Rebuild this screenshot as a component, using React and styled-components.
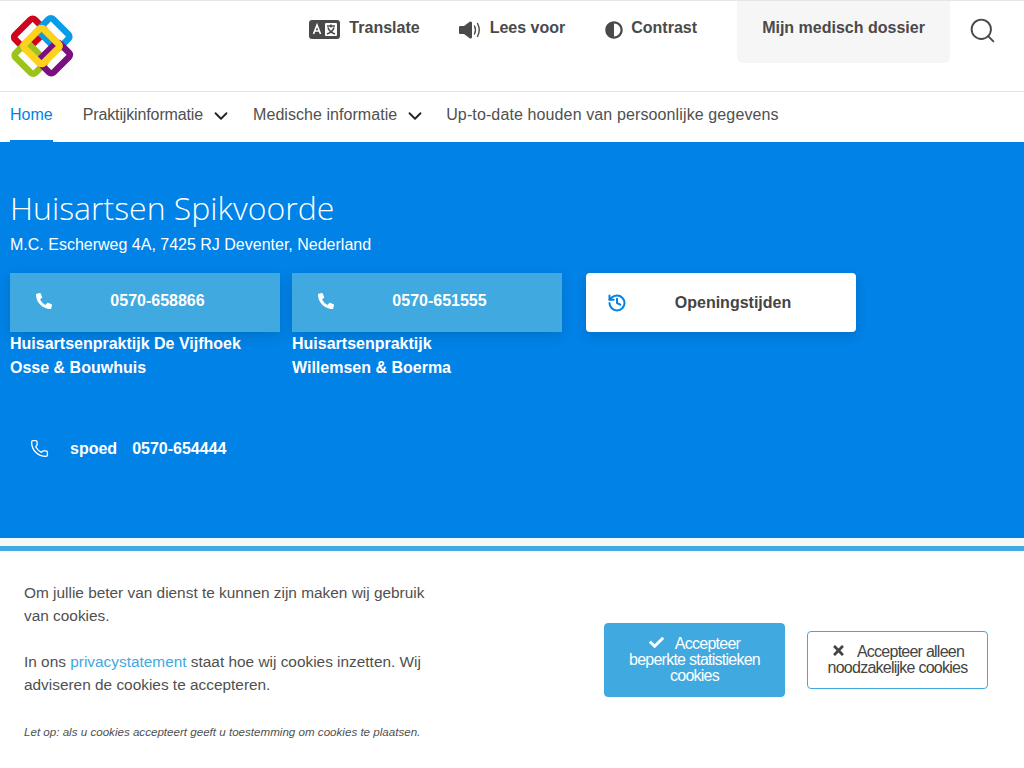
import React from 'react'
import styled, { createGlobalStyle } from 'styled-components'
import { FaAdjust, FaCheck, FaPhoneAlt, FaTimes } from 'react-icons/fa'
import { ChevronDown, History, Phone, Search } from 'lucide-react'

const GlobalStyle = createGlobalStyle`
    html, body {
        margin: 0;
        padding: 0;
        background: #fff;
        font-family: "Liberation Sans", Arial, sans-serif;
        color: #444;
    }
    * { box-sizing: border-box; }
`

const Page = styled.div`
    width: 1024px;
    height: 768px;
    overflow: hidden;
    display: flex;
    flex-direction: column;
    background: #f7f7f7;
`

const TopBar = styled.header`
    height: 92px;
    flex: none;
    background: #fff;
    border-top: 1px solid #e5e5e5;
    border-bottom: 1px solid #e5e5e5;
    display: flex;
    justify-content: space-between;
    padding-left: 10px;
`

const Logo = styled.svg`
    width: 64px;
    height: 64px;
    margin-top: 13px;
    background: #fdfdfd;
`

const Tools = styled.div`
    display: flex;
    align-items: flex-start;
`

const Tool = styled.a`
    display: flex;
    align-items: center;
    gap: ${p => p.$gap}px;
    margin-left: ${p => p.$left || 0}px;
    height: 54px;
    font-size: 16px;
    font-weight: 700;
    color: #4a4a4a;
    white-space: nowrap;
    svg { color: #4a4a4a; margin-top: 3px; }
`

const DossierButton = styled.a`
    width: 213px;
    height: 62px;
    margin: 0 0 0 40px;
    background: #f6f6f6;
    border-radius: 0 0 6px 6px;
    font-size: 16px;
    font-weight: 700;
    color: #4a4a4a;
    display: flex;
    align-items: center;
    justify-content: center;
    padding-bottom: 8px;
`

const SearchButton = styled.button`
    width: 74px;
    height: 59px;
    border: 0;
    background: none;
    padding: 0 10px 0 0;
    display: flex;
    align-items: center;
    justify-content: center;
    color: #4a4a4a;
`

const Nav = styled.nav`
    height: 50px;
    flex: none;
    background: #fff;
    display: flex;
    padding-left: 10px;
`

const NavItem = styled.a`
    height: 50px;
    display: flex;
    align-items: center;
    margin-right: ${p => p.$gap}px;
    font-size: 16px;
    letter-spacing: ${p => p.$track || 0}px;
    color: ${p => (p.$active ? '#0082e6' : '#505050')};
    border-bottom: 2px solid ${p => (p.$active ? '#0082e6' : 'transparent')};
    padding-bottom: 3px;
    white-space: nowrap;
    svg { margin-left: 7px; margin-top: 3px; color: #222; }
`

const Hero = styled.section`
    height: 396px;
    flex: none;
    background: #0082e6;
    color: #fff;
    padding: 46px 10px 0;
`

const Title = styled.h1`
    margin: 0;
    font-size: 32px;
    line-height: 40px;
    font-weight: 300;
    font-family: "Open Sans", sans-serif;
`

const Address = styled.p`
    margin: 5px 0 0;
    font-size: 16px;
    line-height: 24px;
`

const CallRow = styled.div`
    display: flex;
    margin-top: 16px;
`

const CallColumn = styled.div`
    width: 270px;
    margin-right: ${p => p.$gap}px;
`

const CallButton = styled.a`
    height: 59px;
    display: flex;
    align-items: center;
    padding: ${p => (p.$white ? '0 0 0 21px' : '0 0 3px 26px')};
    border-radius: ${p => (p.$white ? '4px' : '0')};
    background: ${p => (p.$white ? '#fff' : '#3fa9e0')};
    color: ${p => (p.$white ? '#444' : '#fff')};
    box-shadow: 0 4px 12px rgba(0, 0, 0, 0.12);
    font-weight: 700;
    font-size: 16px;
    svg { flex: none; color: ${p => (p.$white ? '#0082e6' : '#fff')}; }
`

const CallLabel = styled.span`
    flex: 1;
    text-align: center;
    padding-right: 17px;
`

const Practice = styled.div`
    font-weight: 700;
    font-size: 16px;
    line-height: 24px;
`

const Urgent = styled.div`
    display: flex;
    align-items: center;
    margin: 59px 0 0 20px;
    font-weight: 700;
    font-size: 16px;
    span:first-of-type { margin: 0 15px 0 21px; }
`

const CookieBar = styled.aside`
    margin-top: 8px;
    flex: 1;
    background: #fff;
    border-top: 5px solid #3fa9e0;
    display: flex;
    justify-content: space-between;
    padding: 30px 36px 0 24px;
`

const CookieText = styled.div`
    width: 405px;
    font-size: 15.4px;
    line-height: 23px;
    color: #505050;
    p { margin: 0 0 23px; }
    a { color: #3fa9e0; }
`

const Note = styled.p`
    font-size: 11.6px;
    font-style: italic;
    line-height: 16px;
    margin-top: 28px !important;
`

const CookieButtons = styled.div`
    display: flex;
    align-items: center;
    gap: 22px;
    height: 158px;
`

const CookieButton = styled.button`
    width: 181px;
    height: ${p => (p.$primary ? 74 : 58)}px;
    padding: ${p => (p.$primary ? '0 20px 2px' : '0 10px 2px')};
    border-radius: 4px;
    border: 1px solid #3fa9e0;
    background: ${p => (p.$primary ? '#3fa9e0' : '#fff')};
    color: ${p => (p.$primary ? '#fff' : '#444')};
    font-family: "Liberation Sans", Arial, sans-serif;
    font-size: 16px;
    line-height: 16px;
    letter-spacing: -0.75px;
    text-align: center;
    svg { margin-right: 11px; vertical-align: -1px; }
`

const TranslateIcon = () => (
    <svg width="31" height="19" viewBox="0 0 31 19">
        <rect width="31" height="19" rx="3" fill="currentColor" />
        <path d="M4.5 14 L8 5 L11.5 14 M5.7 11 H10.3" fill="none" stroke="#fff" strokeWidth="1.6" />
        <rect x="16" y="3" width="12" height="13" rx="1" fill="#fff" />
        <path d="M18 6 H26 M22 4.5 V7.5 M19 7.5 C20 11 23 13 26 14 M25 7.5 C24 11 21 13 18 14" fill="none" stroke="currentColor" strokeWidth="1.6" />
    </svg>
)

const SpeakerIcon = () => (
    <svg width="23" height="18" viewBox="0 0 23 18">
        <path d="M1 5 Q0 5 0 6 V12 Q0 13 1 13 H5 L11 17.5 Q13 18 13 16 V2 Q13 0 11 .5 L5 5 Z" fill="currentColor" />
        <path d="M15.5 5 Q17.5 9 15.5 13 M18.5 2.5 Q22 9 18.5 15.5" fill="none" stroke="currentColor" strokeWidth="1.4" strokeLinecap="round" />
    </svg>
)

const App = () => {
    return (
        <Page>
            <GlobalStyle />
            <TopBar>
                <Logo viewBox="0 0 64 64">
                    <g fill="none" strokeWidth="6.5">
                        <rect x="10" y="6" width="19" height="28" rx="3" stroke="#d0021b" transform="rotate(45 19.5 20)" />
                        <rect x="30" y="10" width="28" height="19" rx="3" stroke="#0a9be8" transform="rotate(45 44 19.5)" />
                        <rect x="6" y="35" width="28" height="19" rx="3" stroke="#9bc31c" transform="rotate(45 20 44.5)" />
                        <rect x="35" y="30" width="19" height="28" rx="3" stroke="#7b0f82" transform="rotate(45 44.5 44)" />
                        <rect x="18" y="18.5" width="27" height="27" rx="3" strokeWidth="7" stroke="#fcd21c" transform="rotate(45 31.5 32)" />
                    </g>
                </Logo>
                <Tools>
                    <Tool $gap={9}><TranslateIcon />Translate</Tool>
                    <Tool $left={39} $gap={8}><SpeakerIcon />Lees voor</Tool>
                    <Tool $left={40} $gap={8}><FaAdjust size={18} />Contrast</Tool>
                    <DossierButton>Mijn medisch dossier</DossierButton>
                    <SearchButton aria-label="Zoeken"><Search size={29} strokeWidth={1.6} /></SearchButton>
                </Tools>
            </TopBar>
            <Nav>
                <NavItem $active $gap={30}>Home</NavItem>
                <NavItem $gap={21} $track={-0.13}>Praktijkinformatie<ChevronDown size={22} /></NavItem>
                <NavItem $gap={20} $track={0.05}>Medische informatie<ChevronDown size={22} /></NavItem>
                <NavItem $gap={0} $track={0.12}>Up-to-date houden van persoonlijke gegevens</NavItem>
            </Nav>
            <Hero>
                <Title>Huisartsen Spikvoorde</Title>
                <Address>M.C. Escherweg 4A, 7425 RJ Deventer, Nederland</Address>
                <CallRow>
                    <CallColumn $gap={12}>
                        <CallButton><FaPhoneAlt size={16} /><CallLabel>0570-658866</CallLabel></CallButton>
                        <Practice>Huisartsenpraktijk De Vijfhoek<br />Osse &amp; Bouwhuis</Practice>
                    </CallColumn>
                    <CallColumn $gap={24}>
                        <CallButton><FaPhoneAlt size={16} /><CallLabel>0570-651555</CallLabel></CallButton>
                        <Practice>Huisartsenpraktijk<br />Willemsen &amp; Boerma</Practice>
                    </CallColumn>
                    <CallColumn $gap={0}>
                        <CallButton $white><History size={20} strokeWidth={2.4} /><CallLabel>Openingstijden</CallLabel></CallButton>
                    </CallColumn>
                </CallRow>
                <Urgent>
                    <Phone size={19} strokeWidth={1.7} />
                    <span>spoed</span>
                    <span>0570-654444</span>
                </Urgent>
            </Hero>
            <CookieBar>
                <CookieText>
                    <p>Om jullie beter van dienst te kunnen zijn maken wij gebruik van cookies.</p>
                    <p>In ons <a>privacystatement</a> staat hoe wij cookies inzetten. Wij adviseren de cookies te accepteren.</p>
                    <Note>Let op: als u cookies accepteert geeft u toestemming om cookies te plaatsen.</Note>
                </CookieText>
                <CookieButtons>
                    <CookieButton $primary><FaCheck size={15} />Accepteer beperkte statistieken cookies</CookieButton>
                    <CookieButton><FaTimes size={15} />Accepteer alleen noodzakelijke cookies</CookieButton>
                </CookieButtons>
            </CookieBar>
        </Page>
    )
}

export default App
